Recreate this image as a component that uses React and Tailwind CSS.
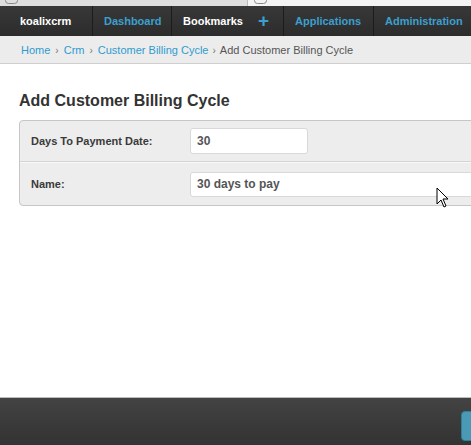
import React from 'react'

const navItems = [
  { label: 'Dashboard', w: 'w-[79px]' },
  { label: 'Bookmarks', w: 'w-[112px]', plus: true, white: true },
  { label: 'Applications', w: 'w-[90px]' },
  { label: 'Administration', w: 'w-[100px]' },
]

const Cursor = () => (
  <svg width="14" height="22" viewBox="0 0 14 22" className="absolute left-[436px] top-[187px]">
    <path d="M1 1 L1 17 L5 13 L8 20 L10 19 L7 12 L12 12 Z" fill="#fff" stroke="#000" strokeWidth="1" strokeLinejoin="round" />
  </svg>
)

const Sep = () => <span className="mx-[5px] text-[#777] text-[10px]">›</span>

const App = () => {
  return (
    <div className="relative w-[471px] h-[445px] overflow-hidden bg-white flex flex-col font-['Liberation_Sans',Arial,sans-serif]">
      {/* browser tab strip */}
      <div className="h-[6px] flex shrink-0">
        <div className="w-[247px] bg-[#dedede] relative">
          <div className="absolute left-[5px] -top-[3px] w-[13px] h-[7px] border border-[#888] rounded-sm" />
        </div>
        <div className="flex-1 bg-[#f4f4f4] relative border-l border-[#bbb]">
          <div className="absolute left-[6px] -top-[3px] w-[13px] h-[7px] border border-[#888] rounded-sm" />
        </div>
      </div>

      {/* top nav */}
      <div className="h-[30px] flex shrink-0 overflow-hidden bg-gradient-to-b from-[#383838] to-[#2c2c2c] text-[11px] font-bold">
        <div className="w-[93px] shrink-0 flex items-center pl-[20px] text-white border-r border-[#1c1c1c]">koalixcrm</div>
        {navItems.map((item) => (
          <div
            key={item.label}
            className={`${item.w} shrink-0 flex items-center pl-[11px] gap-[15px] border-r border-[#1c1c1c] ${item.white ? 'text-white' : 'text-[#3ba0cf]'}`}
          >
            <span>{item.label}</span>
            {item.plus && <span className="text-[#3ba0cf] text-[19px] font-bold leading-none -mt-[2px]">+</span>}
          </div>
        ))}
      </div>

      {/* breadcrumb */}
      <div className="h-[28px] shrink-0 bg-[#ececec] border-b border-[#cfcfcf] flex items-center pl-[21px] pt-[1px] text-[11px] text-[#555]">
        <span className="text-[#2e9bd0]">Home</span>
        <Sep />
        <span className="text-[#2e9bd0]">Crm</span>
        <Sep />
        <span className="text-[#2e9bd0]">Customer Billing Cycle</span>
        <span className="mx-[4px] text-[#777] text-[10px]">›</span>
        <span>Add Customer Billing Cycle</span>
      </div>

      {/* content */}
      <div className="flex-1 pl-[19px] pt-[29px]">
        <h1 className="text-[16px] font-bold text-[#333] leading-none whitespace-nowrap">Add Customer Billing Cycle</h1>
        <div className="mt-[11px] w-[470px] bg-[#ededed] border border-[#c6c6c6] rounded-[4px] text-[11px] font-bold text-[#3a3a3a]">
          <div className="h-[41px] flex items-center border-b border-[#d4d4d4]">
            <div className="w-[170px] pl-[11px]">Days To Payment Date:</div>
            <div className="w-[118px] h-[26px] bg-white border border-[#d9d9d9] rounded-[3px] flex items-center pl-[6px] text-[12px] text-[#555]">30</div>
          </div>
          <div className="h-[43px] flex items-center border-t border-[#f8f8f8]">
            <div className="w-[170px] pl-[11px]">Name:</div>
            <div className="w-[290px] h-[25px] bg-white border border-[#d9d9d9] rounded-[3px] flex items-center pl-[6px] text-[12px] text-[#555]">30 days to pay</div>
          </div>
        </div>
      </div>

      {/* footer */}
      <div className="h-[48px] shrink-0 border-t border-[#bdbdbd] bg-gradient-to-b from-[#434343] to-[#333] relative">
        <div className="absolute left-[461px] top-[13px] w-[30px] h-[30px] rounded-[4px] bg-[#4a9ab5] border border-[#2e7f9c]" />
      </div>

      <Cursor />
    </div>
  )
}

export default App
